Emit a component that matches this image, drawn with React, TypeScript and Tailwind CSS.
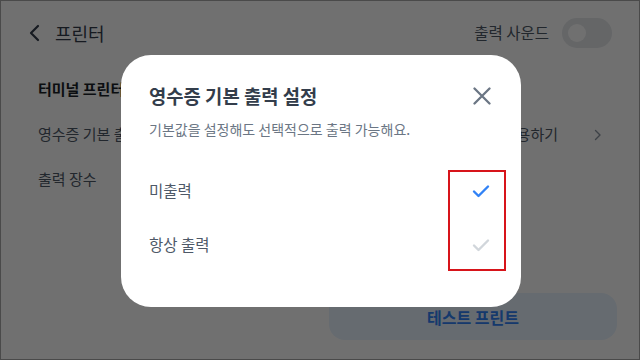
import React from 'react';

const Check: React.FC<{ color: string }> = ({ color }) => (
  <svg width="18" height="14" viewBox="0 0 18 14" fill="none">
    <path d="M2 7.5L6.5 12L16 2.5" stroke={color} strokeWidth="2.4" strokeLinecap="round" strokeLinejoin="round" />
  </svg>
);

const App: React.FC = () => {
  return (
    <div
      className="relative w-[640px] h-[360px] overflow-hidden bg-white border border-[#4a4a4a]"
      style={{ fontFamily: '"Noto Sans CJK KR", "Noto Sans", sans-serif' }}
    >
      {/* page behind the dialog */}
      <div className="flex items-center justify-between h-[64px] pl-[26px] pr-[27px]">
        <div className="flex items-center gap-[14px]">
          <svg width="14" height="18" viewBox="0 0 14 18" fill="none">
            <path d="M11 2L4 9L11 16" stroke="#333d4b" strokeWidth="2.2" strokeLinecap="round" strokeLinejoin="round" />
          </svg>
          <span className="text-[18px] text-[#333d4b]">프린터</span>
        </div>
        <div className="flex items-center gap-[13px]">
          <span className="text-[15.5px] text-[#4e5968]">출력 사운드</span>
          <div className="w-[50px] h-[30px] rounded-full bg-[#e5e8eb] flex items-center pl-[6px]">
            <div className="w-[18px] h-[18px] rounded-full bg-white" />
          </div>
        </div>
      </div>

      <div className="flex flex-col px-[37px] pt-[2px]">
        <div className="h-[45px] flex items-center text-[15px] font-bold text-[#191f28]">터미널 프린터</div>
        <div className="h-[45px] flex items-center justify-between text-[15px] text-[#4e5968]">
          <span>영수증 기본 출력 설정</span>
          <div className="flex items-center gap-[36px]">
            <span>미출력으로 사용하기</span>
            <svg width="8" height="12" viewBox="0 0 8 12" fill="none">
              <path d="M1.5 1.5L6 6L1.5 10.5" stroke="#8b95a1" strokeWidth="1.4" strokeLinecap="round" strokeLinejoin="round" />
            </svg>
          </div>
        </div>
        <div className="h-[45px] flex items-center text-[15px] text-[#4e5968]">출력 장수</div>
      </div>

      <div className="absolute left-[328px] top-[292px] w-[288px] h-[47px] rounded-[16px] bg-[#e8f3ff] flex items-center justify-center text-[16px] font-bold text-[#3182f6]">
        테스트 프린트
      </div>

      {/* dim overlay */}
      <div className="absolute inset-0 bg-black/[0.56]" />

      {/* dialog */}
      <div className="absolute left-[120px] top-[54px] w-[400px] h-[252px] rounded-[30px] bg-white px-[28px] pt-[28px]">
        <div className="flex items-center justify-between">
          <h2 className="text-[18.8px] font-bold text-[#333d4b] leading-[26px]">영수증 기본 출력 설정</h2>
          <svg className="mr-[2px]" width="18" height="18" viewBox="0 0 18 18" fill="none">
            <path d="M1.5 1.5L16.5 16.5M16.5 1.5L1.5 16.5" stroke="#6b7684" strokeWidth="2.3" strokeLinecap="round" />
          </svg>
        </div>
        <p className="mt-[10px] text-[14px] text-[#6b7684] leading-[20px]">기본값을 설정해도 선택적으로 출력 가능해요.</p>
        <div className="mt-[25px] flex flex-col">
          <div className="h-[54px] flex items-center justify-between pr-[3px]">
            <span className="text-[15.5px] text-[#4e5968]">미출력</span>
            <Check color="#3182f6" />
          </div>
          <div className="h-[54px] flex items-center justify-between pr-[3px]">
            <span className="text-[15.5px] text-[#4e5968]">항상 출력</span>
            <Check color="#d1d6db" />
          </div>
        </div>
      </div>

      {/* highlight box */}
      <div className="absolute left-[447px] top-[169px] w-[58px] h-[101px] border-2 border-[#d7141a]" />
    </div>
  );
};

export default App;
